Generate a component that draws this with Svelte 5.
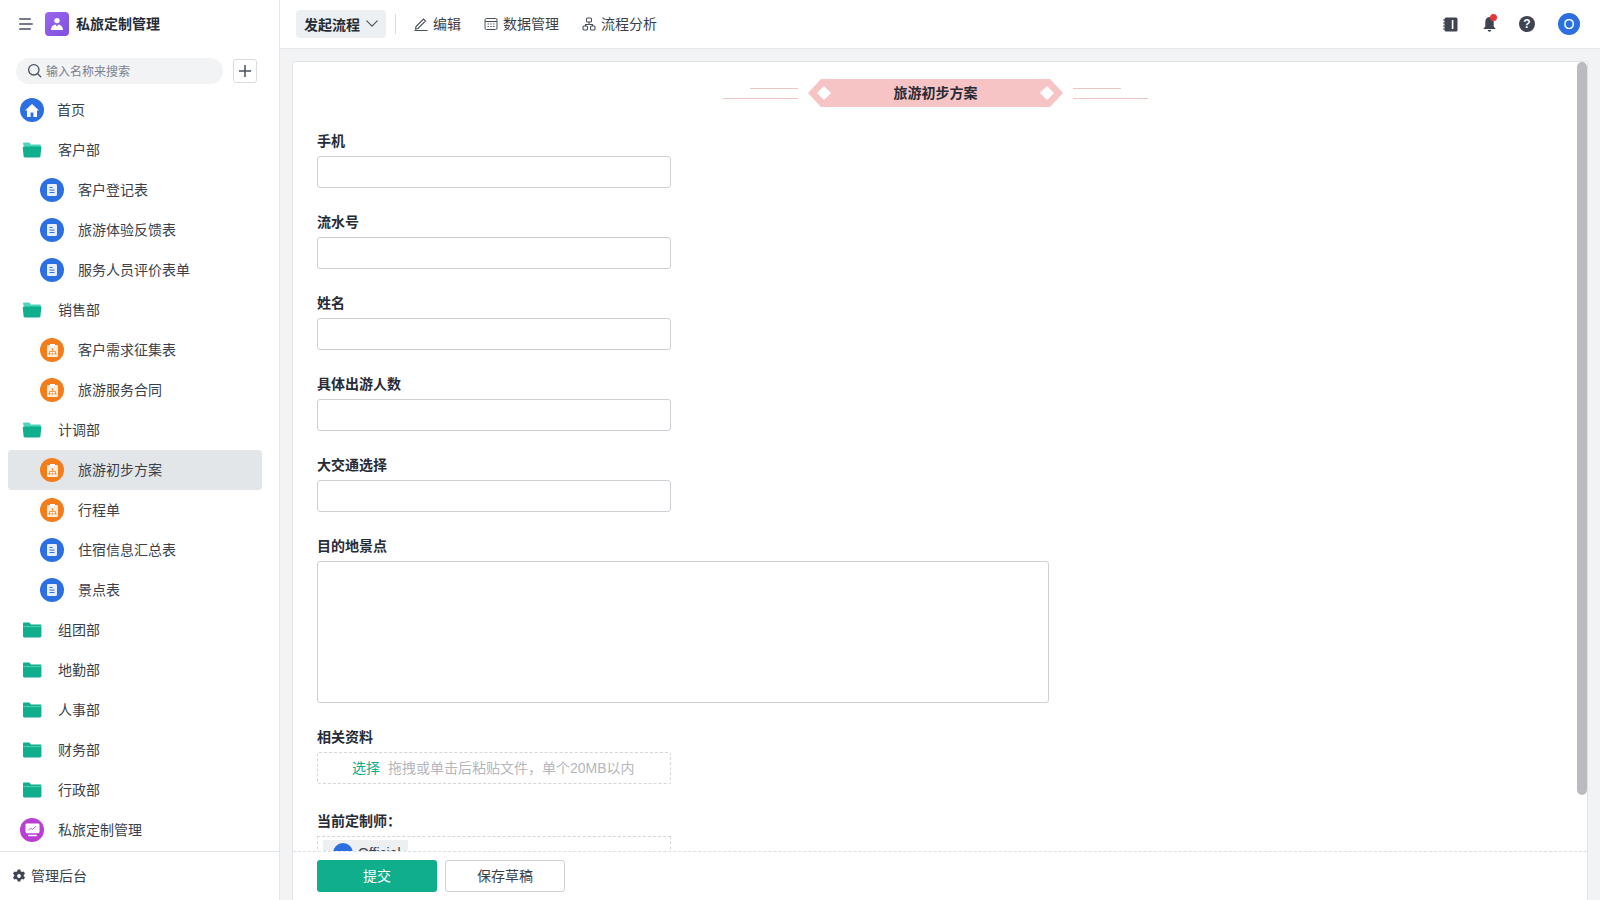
<script>
  const ICONS = {
    doc: 'blue',
    org: 'orange'
  };

  const nav = [
    { kind: 'home', label: '首页' },
    { kind: 'open', label: '客户部' },
    { kind: 'doc', label: '客户登记表', sub: true },
    { kind: 'doc', label: '旅游体验反馈表', sub: true },
    { kind: 'doc', label: '服务人员评价表单', sub: true },
    { kind: 'open', label: '销售部' },
    { kind: 'org', label: '客户需求征集表', sub: true },
    { kind: 'org', label: '旅游服务合同', sub: true },
    { kind: 'open', label: '计调部' },
    { kind: 'org', label: '旅游初步方案', sub: true, active: true },
    { kind: 'org', label: '行程单', sub: true },
    { kind: 'doc', label: '住宿信息汇总表', sub: true },
    { kind: 'doc', label: '景点表', sub: true },
    { kind: 'closed', label: '组团部' },
    { kind: 'closed', label: '地勤部' },
    { kind: 'closed', label: '人事部' },
    { kind: 'closed', label: '财务部' },
    { kind: 'closed', label: '行政部' },
    { kind: 'screen', label: '私旅定制管理' }
  ];

  const fields = ['手机', '流水号', '姓名', '具体出游人数', '大交通选择'];
</script>

<div class="page">
  <aside class="sidebar">
    <div class="brand">
      <svg class="menu" width="14" height="12" viewBox="0 0 14 12" fill="none" stroke="#4a4f5c" stroke-width="1.500" stroke-linecap="round">
        <path d="M.8 1h10.500M.8 6h12.400M.8 11h10.500" />
      </svg>
      <div class="logo">
        <svg width="14" height="14" viewBox="0 0 14 14" fill="#fff">
          <circle cx="7" cy="3.600" r="2.700" />
          <path d="M1 13c0-3.600 2.400-5.400 4.600-5.600L7 9.400l1.400-2C10.600 7.600 13 9.400 13 13z" />
        </svg>
      </div>
      <span class="brand-name">私旅定制管理</span>
    </div>

    <div class="search-row">
      <div class="search">
        <svg width="15" height="15" viewBox="0 0 15 15" fill="none" stroke="#4a4f5c" stroke-width="1.300" stroke-linecap="round">
          <circle cx="6.800" cy="6.800" r="5.200" />
          <path d="M10.700 10.700l3 3" />
        </svg>
        <span>输入名称来搜索</span>
      </div>
      <button class="add" aria-label="新建">
        <svg width="14" height="14" viewBox="0 0 14 14" stroke="#4a4f5c" stroke-width="1.500"><path d="M7 1v12M1 7h12" /></svg>
      </button>
    </div>

    <nav class="nav">
      {#each nav as item}
        <div class="row" class:sub={item.sub} class:active={item.active}>
          {#if item.kind === 'open'}
            <svg class="folder" width="20" height="16" viewBox="0 0 20 16">
              <path d="M1 1.600C1 .9 1.500.5 2.200.5h5l1.800 2h8.800c.6 0 1 .4 1 1V5H3.600L1.900 4.600z" fill="#4fd6bc" />
              <path d="M2.200 4.600h16.300c.6 0 1 .5.9 1.100l-1 8.600c-.1.7-.6 1.200-1.300 1.200H2.900c-.7 0-1.200-.5-1.300-1.200L.8 6c0-.8.6-1.400 1.400-1.400z" fill="#0fae8c" />
            </svg>
          {:else if item.kind === 'closed'}
            <svg class="folder" width="20" height="16" viewBox="0 0 20 16">
              <path d="M1 1.600C1 .9 1.500.5 2.200.5h5.200L9 2.400h9.400c.6 0 1 .4 1 1V14c0 .8-.6 1.400-1.400 1.400H2.200C1.500 15.400 1 14.800 1 14z" fill="#0fae8c" />
              <path d="M1 4.600h18.400" stroke="#5fdcc3" stroke-width=".8" />
            </svg>
          {:else if item.kind === 'home'}
            <span class="badge blue">
              <svg width="14" height="13" viewBox="0 0 14 13" fill="#fff"><path d="M7 0L14 6.400h-2V13H8.400V8.600H5.600V13H2V6.400H0z" /></svg>
            </span>
          {:else if item.kind === 'screen'}
            <span class="badge purple">
              <svg width="15" height="14" viewBox="0 0 16 15">
                <rect x=".5" y=".5" width="15" height="10.500" rx="1.500" fill="#fff" />
                <path d="M3.500 8l2.500-2.500 2 1.500 3.500-3.500" fill="none" stroke="#b93fd2" stroke-width="1" />
                <path d="M4 13.500h8" stroke="#fff" stroke-width="1.600" stroke-linecap="round" />
              </svg>
            </span>
          {:else}
            <span class="badge {ICONS[item.kind]}">
              {#if item.kind === 'doc'}
                <svg width="10" height="12" viewBox="0 0 10 12">
                  <rect width="10" height="12" rx="1.200" fill="#e7eefc" />
                  <path d="M2.500 3.500h3M2.500 6h5M2.500 8.500h5" stroke="#2b6fe0" stroke-width="1" />
                </svg>
              {:else}
                <svg width="11" height="13" viewBox="0 0 11 13">
                  <rect y="1" width="11" height="12" rx="1.200" fill="#fdeedd" />
                  <rect x="3" width="5" height="2.200" rx=".6" fill="#fff" />
                  <path d="M5.500 5v2M2.500 9.500V7.500h6v2" fill="none" stroke="#f47d1b" stroke-width=".7" />
                  <path d="M4.700 4.200h1.600v1.400H4.700zM1.700 9h1.600v1.400H1.700zM4.700 9h1.600v1.400H4.700zM7.700 9h1.600v1.400H7.700z" fill="#f47d1b" />
                </svg>
              {/if}
            </span>
          {/if}
          <span class="row-label">{item.label}</span>
        </div>
      {/each}
    </nav>

    <div class="admin">
      <svg width="14" height="14" viewBox="0 0 14 14">
        <path fill="#3f4450" fill-rule="evenodd" d="M5.700.5h2.600l.4 1.700 1.300.7 1.700-.5 1.300 2.200-1.300 1.300v1.200l1.300 1.300-1.300 2.200-1.700-.5-1.300.7-.4 1.700H5.700l-.4-1.700-1.300-.7-1.700.5L1 8.400l1.300-1.300V5.900L1 4.600l1.300-2.200 1.700.5 1.300-.7zM7 5.100a1.900 1.900 0 100 3.800 1.900 1.900 0 000-3.800z" />
      </svg>
      <span>管理后台</span>
    </div>
  </aside>

  <main class="main">
    <header class="topbar">
      <button class="start">
        发起流程
        <svg width="12" height="7" viewBox="0 0 12 7" fill="none" stroke="#4a4f5c" stroke-width="1.100"><path d="M.5.700L6 6.200 11.500.7" /></svg>
      </button>
      <span class="divider"></span>
      <div class="tool tool-first">
        <svg width="14" height="14" viewBox="0 0 14 14" fill="none" stroke="#4a4f5c" stroke-width="1.100"><path d="M2 9.500L9.500 2l2 2L4 11.500l-2.500.5zM.5 13.500h13" /></svg>
        <span>编辑</span>
      </div>
      <div class="tool">
        <svg width="14" height="14" viewBox="0 0 14 14" fill="none" stroke="#4a4f5c" stroke-width="1"><rect x="1" y="1.500" width="12" height="11" rx="1.500" /><path d="M1 4.500h12" /><path d="M3.500 7h7M3.500 9.500h7" stroke-dasharray="1.500 1.250" /></svg>
        <span>数据管理</span>
      </div>
      <div class="tool">
        <svg width="14" height="14" viewBox="0 0 14 14" fill="none" stroke="#4a4f5c" stroke-width="1.100"><rect x="4.500" y="1" width="5" height="4" rx="1" /><rect x="1" y="9" width="4.500" height="4" rx="1" /><rect x="8.500" y="9" width="4.500" height="4" rx="1" /><path d="M7 5v2M3.500 9V7.500h7V9" /></svg>
        <span>流程分析</span>
      </div>
      <div class="top-right">
        <svg class="book" width="15" height="15" viewBox="0 0 15 15">
          <rect x="1.500" y=".5" width="13" height="14" rx="1.500" fill="#3f4450" />
          <path d="M0 3h2.500M0 6h2.500M0 9h2.500M0 12h2.500" stroke="#3f4450" stroke-width="1" />
          <rect x="8.800" y="3" width="1.600" height="9" fill="#fff" />
        </svg>
        <span class="bell">
          <svg width="13" height="16" viewBox="0 0 13 16" fill="#3f4450">
            <path d="M6.500 1C9.300 1 10.700 3.200 10.700 6v4.500L12.800 13H.2l2.100-2.500V6C2.300 3.200 3.700 1 6.500 1z" />
            <path d="M4.800 14h3.400a1.700 1.700 0 01-3.400 0z" />
          </svg>
          <i class="dot"></i>
        </span>
        <span class="help">?</span>
        <span class="avatar">O</span>
      </div>
    </header>

    <div class="content">
      <section class="card">
        <div class="form">
          <div class="title">
            <span class="lines left"><i></i><i></i></span>
            <div class="ribbon">
              <i class="diamond"></i>
              <span>旅游初步方案</span>
              <i class="diamond"></i>
            </div>
            <span class="lines right"><i></i><i></i></span>
          </div>

          {#each fields as f}
            <div class="field">
              <label for={f}>{f}</label>
              <input id={f} type="text" />
            </div>
          {/each}

          <div class="field">
            <label for="dest">目的地景点</label>
            <textarea id="dest"></textarea>
          </div>

          <div class="field upload-field">
            <span class="label">相关资料</span>
            <div class="upload"><b>选择</b><span>拖拽或单击后粘贴文件，单个20MB以内</span></div>
          </div>

          <div class="field">
            <span class="label">当前定制师：</span>
            <div class="owner">
              <span class="tag"><i class="tag-avatar"></i>Official</span>
            </div>
          </div>
        </div>

        <div class="scrollbar"></div>

        <footer class="actions">
          <button class="submit">提交</button>
          <button class="draft">保存草稿</button>
        </footer>
      </section>
    </div>
  </main>
</div>

<style>
  :global(body) {
    margin: 0;
    font-family: "Liberation Sans", "Noto Sans CJK SC", sans-serif;
    color: #1f2430;
  }

  * {
    box-sizing: border-box;
  }

  button {
    font: inherit;
  }

  .page {
    display: flex;
    width: 1600px;
    height: 900px;
    overflow: hidden;
  }

  .sidebar {
    flex: 0 0 280px;
    display: flex;
    flex-direction: column;
    background: #fff;
    border-right: 1px solid #e3e5e8;
  }

  .brand {
    display: flex;
    align-items: center;
    height: 48px;
    padding-left: 19px;
  }

  .logo {
    display: flex;
    align-items: center;
    justify-content: center;
    width: 24px;
    height: 24px;
    margin-left: 12px;
    border-radius: 4px;
    background: linear-gradient(135deg, #9a68ee, #7f4fe0);
  }

  .brand-name {
    margin-left: 7px;
    padding-bottom: 2px;
    font-size: 14px;
    font-weight: 600;
    color: #262b36;
  }

  .search-row {
    display: flex;
    align-items: center;
    padding: 3px 0 0 16px;
    height: 42px;
  }

  .search {
    display: flex;
    align-items: center;
    gap: 4px;
    width: 207px;
    height: 26px;
    padding-left: 11px;
    border-radius: 13px;
    background: #f1f3f5;
    font-size: 12px;
    color: #7d828c;
  }

  .add {
    display: flex;
    align-items: center;
    justify-content: center;
    width: 24px;
    height: 24px;
    margin-left: 10px;
    padding: 0;
    background: #fff;
    border: 1px solid #d8dbdf;
    border-radius: 3px;
  }

  .nav {
    flex: 1;
    min-height: 0;
    padding: 0 8px;
  }

  .row {
    display: flex;
    align-items: center;
    height: 40px;
    padding-left: 12px;
    border-radius: 4px;
    font-size: 14px;
    color: #3a3f4b;
  }

  .row-label {
    padding-bottom: 2px;
  }

  .row.sub {
    padding-left: 32px;
  }

  .row.active {
    width: 254px;
    background: #e3e6e8;
  }

  .folder {
    margin: 0 16px 0 2px;
  }

  .badge {
    display: flex;
    align-items: center;
    justify-content: center;
    flex: none;
    width: 24px;
    height: 24px;
    margin-right: 13px;
    border-radius: 50%;
  }

  .row.sub .badge {
    margin-right: 14px;
  }

  .badge.blue {
    background: #2b6fe0;
  }

  .badge.orange {
    background: #f47d1b;
  }

  .badge.purple {
    margin-right: 14px;
    background: #b93fd2;
  }

  .admin {
    display: flex;
    align-items: center;
    gap: 5px;
    height: 49px;
    padding-left: 12px;
    border-top: 1px solid #e3e5e8;
    font-size: 14px;
    color: #3a3f4b;
  }

  .admin span {
    padding-bottom: 2px;
  }

  .main {
    flex: 1;
    min-width: 0;
    display: flex;
    flex-direction: column;
  }

  .topbar {
    display: flex;
    align-items: center;
    flex: 0 0 49px;
    padding-left: 16px;
    background: #fff;
    border-bottom: 1px solid #e6e8eb;
    font-size: 14px;
    color: #3a3f4b;
  }

  .start {
    display: flex;
    align-items: center;
    gap: 6px;
    height: 28px;
    padding: 0 8px 1px;
    border: 0;
    border-radius: 4px;
    background: #edf0f2;
    font-weight: 600;
    color: #262b36;
  }

  .divider {
    width: 1px;
    height: 20px;
    margin-left: 9px;
    background: #d8dbdf;
  }

  .tool {
    display: flex;
    align-items: center;
    gap: 5px;
    margin-left: 23px;
  }

  .tool span {
    padding-bottom: 2px;
  }

  .tool-first {
    margin-left: 18px;
  }

  .top-right {
    display: flex;
    align-items: center;
    gap: 23px;
    margin-left: auto;
    padding-right: 20px;
  }

  .book {
    margin-right: 2px;
  }

  .bell {
    position: relative;
    display: flex;
  }

  .dot {
    position: absolute;
    top: -2px;
    right: -1px;
    width: 7px;
    height: 7px;
    border-radius: 50%;
    background: #e5383b;
  }

  .help {
    width: 16px;
    height: 16px;
    border-radius: 50%;
    background: #3f4450;
    color: #fff;
    font-size: 12px;
    font-weight: 700;
    line-height: 16px;
    text-align: center;
  }

  .avatar {
    width: 22px;
    height: 22px;
    border-radius: 50%;
    background: #2b6fe0;
    color: #fff;
    font-size: 14px;
    line-height: 22px;
    text-align: center;
  }

  .content {
    flex: 1;
    min-height: 0;
    padding: 12px 12px 0 12px;
    background: #f1f3f5;
  }

  .card {
    position: relative;
    display: flex;
    flex-direction: column;
    height: 100%;
    overflow: hidden;
    background: #fff;
    border: 1px solid #e1e3e6;
    border-bottom: 0;
    border-radius: 3px 3px 0 0;
  }

  .form {
    flex: 1;
    min-height: 0;
    overflow: hidden;
    padding: 17px 0 0 24px;
  }

  .title {
    display: flex;
    align-items: center;
    justify-content: center;
    width: 1237px;
    height: 28px;
    margin-bottom: 17px;
  }

  .ribbon {
    display: flex;
    align-items: center;
    justify-content: space-between;
    width: 255px;
    height: 28px;
    padding: 0 11px;
    margin: 0 10px;
    background: #f6c4c4;
    clip-path: polygon(13px 0, calc(100% - 13px) 0, 100% 50%, calc(100% - 13px) 100%, 13px 100%, 0 50%);
    font-size: 14px;
    font-weight: 600;
    color: #262b36;
  }

  .ribbon span {
    padding-bottom: 2px;
  }

  .diamond {
    width: 10px;
    height: 10px;
    background: #fff;
    transform: rotate(45deg);
  }

  .lines {
    display: flex;
    flex-direction: column;
    gap: 9px;
    width: 75px;
    margin-top: 1px;
  }

  .lines i {
    display: block;
    width: 100%;
    height: 1px;
    background: #f0c4c4;
  }

  .lines.left {
    align-items: flex-end;
  }

  .lines i:first-child {
    width: 48px;
  }

  .field {
    display: flex;
    flex-direction: column;
    margin-bottom: 17px;
  }

  label,
  .label {
    height: 32px;
    padding-top: 7px;
    font-size: 14px;
    line-height: 20px;
    font-weight: 600;
    color: #262b36;
  }

  input {
    width: 354px;
    height: 32px;
    background: #fff;
    border: 1px solid #ccd0d5;
    border-radius: 3px;
  }

  textarea {
    display: block;
    width: 732px;
    height: 142px;
    background: #fff;
    border: 1px solid #ccd0d5;
    border-radius: 3px;
    resize: none;
  }

  .upload {
    display: flex;
    align-items: center;
    width: 354px;
    height: 32px;
    padding: 0 0 2px 34px;
    border: 1px dashed #d3d6da;
    border-radius: 2px;
    font-size: 14px;
    color: #b4b7bd;
  }

  .upload b {
    margin-right: 8px;
    font-weight: 400;
    color: #0fae8c;
  }

  .upload-field {
    margin-bottom: 20px;
  }

  .owner {
    display: flex;
    align-items: flex-start;
    width: 354px;
    height: 40px;
    padding: 3px 5px;
    border: 1px dashed #d3d6da;
  }

  .tag {
    display: flex;
    align-items: center;
    gap: 5px;
    height: 26px;
    padding: 0 7px 0 10px;
    background: #edeff1;
    font-size: 14px;
    color: #3a3f4b;
  }

  .tag-avatar {
    width: 20px;
    height: 20px;
    border-radius: 50%;
    background: #2b6fe0;
  }

  .scrollbar {
    position: absolute;
    top: 0;
    right: 0;
    width: 10px;
    height: 733px;
    border-radius: 5px;
    background: #b9bbbe;
  }

  .actions {
    position: absolute;
    left: 0;
    right: 0;
    bottom: 0;
    display: flex;
    gap: 8px;
    height: 49px;
    padding: 8px 0 0 24px;
    background: #fff;
    border-top: 1px dashed #dcdfe3;
  }

  .actions button {
    width: 120px;
    height: 32px;
    padding: 0 0 2px;
    border-radius: 3px;
    font-size: 14px;
  }

  .submit {
    border: 0;
    background: #0fae8c;
    color: #fff;
  }

  .draft {
    background: #fff;
    border: 1px solid #ccd0d5;
    color: #3a3f4b;
  }
</style>
